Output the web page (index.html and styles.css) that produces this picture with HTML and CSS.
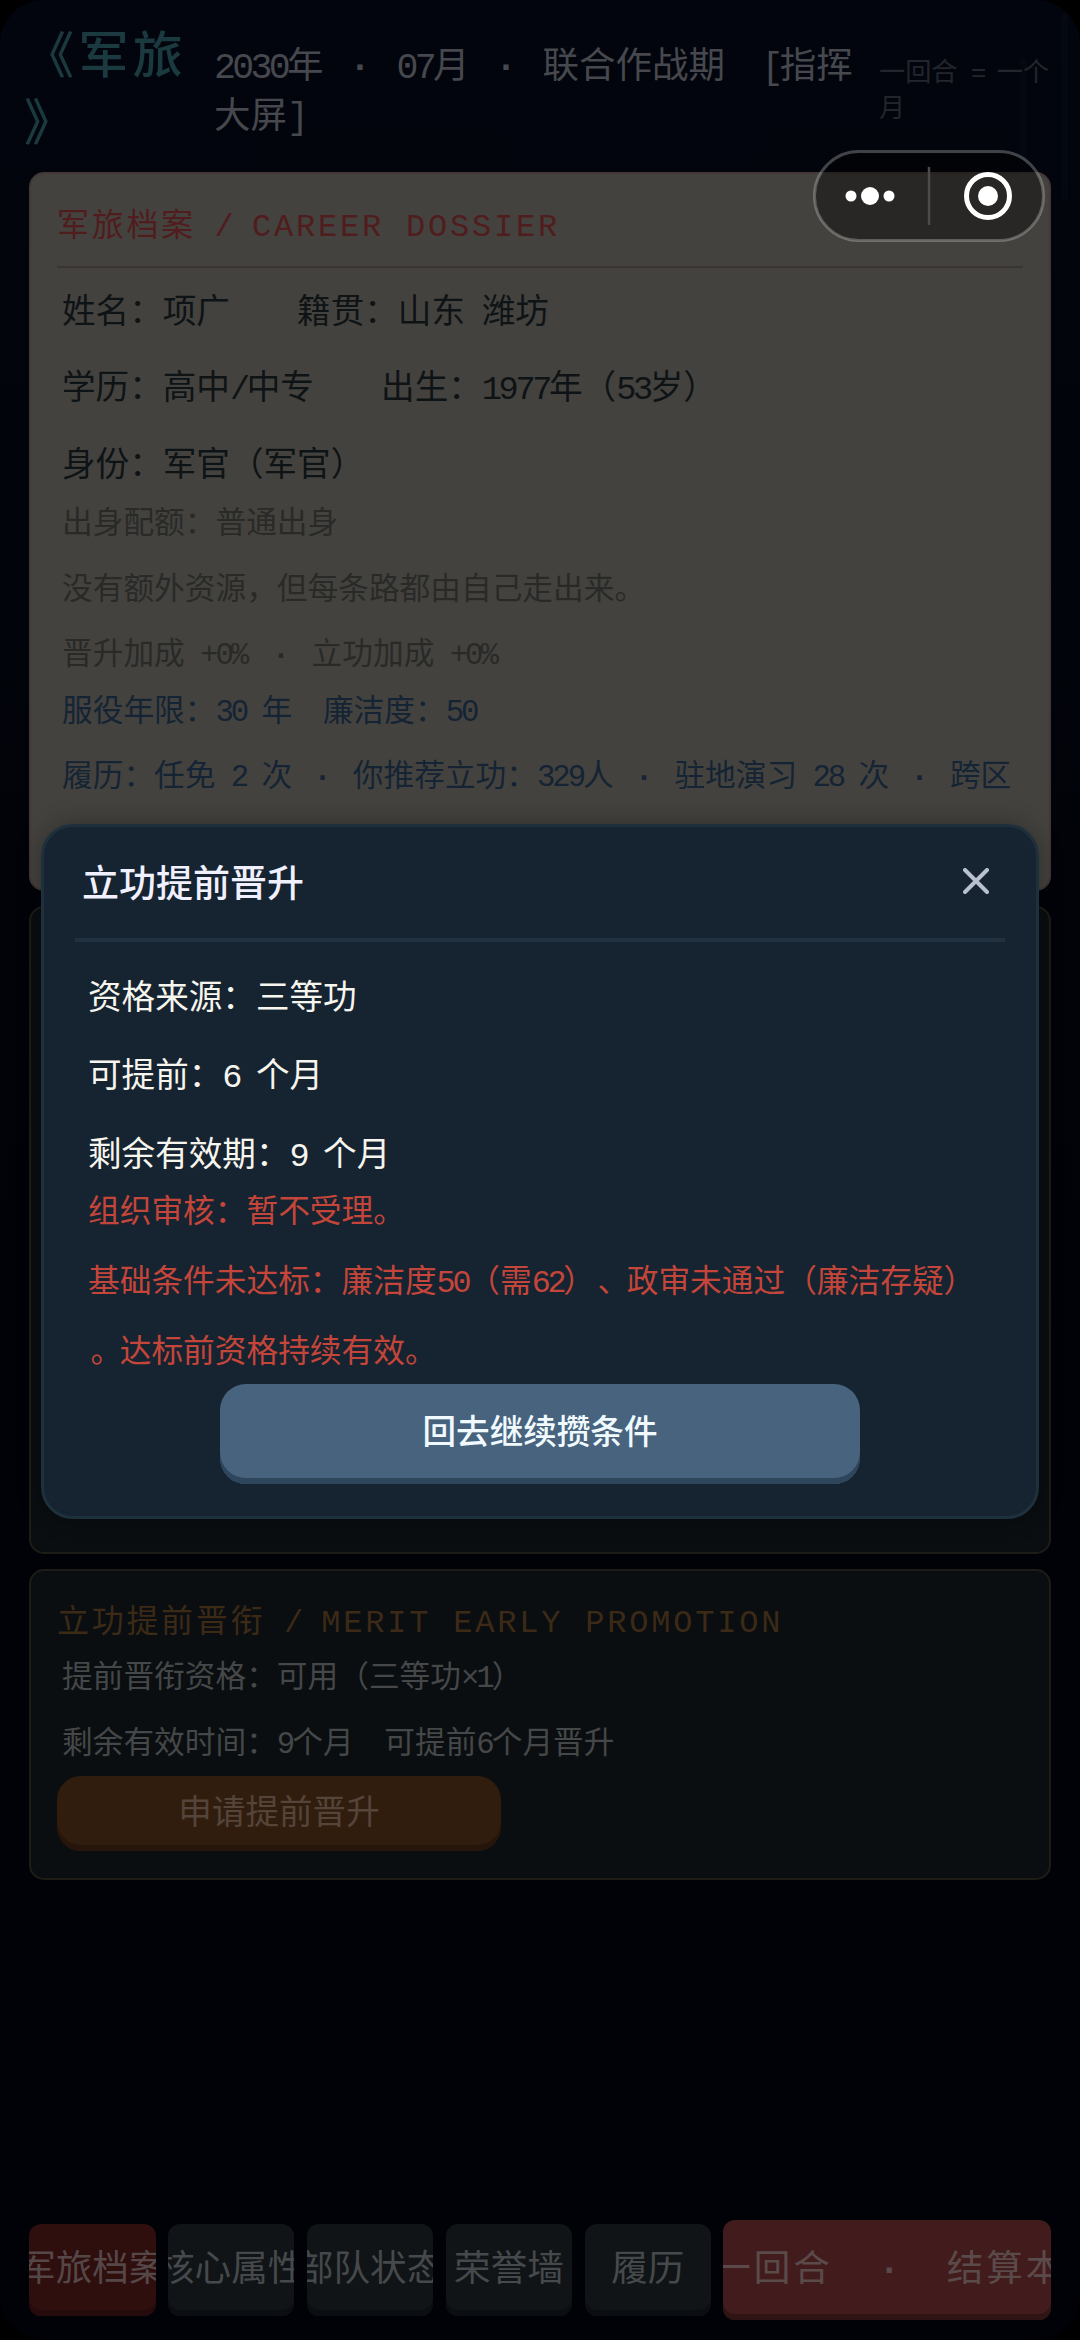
FILE: index.html
```html
<!DOCTYPE html>
<html lang="zh-CN">
<head>
<meta charset="utf-8">
<title>军旅</title>
<link rel="stylesheet" href="styles.css">
</head>
<body>
<div class="screen">
  <header class="top">
    <div class="brand">《军旅<br>》</div>
    <div class="date"><i>2030</i>年<i> </i><b>·</b><i> 07</i>月<i> </i><b>·</b><i> </i>联合作战期<i>  [</i>指挥<br>大屏<i>]</i></div>
    <div class="hint">一回合<i> = </i>一个<br>月</div>
  </header>

  <section class="card dossier">
    <h2 class="title red">军旅档案<i> / </i><em>CAREER DOSSIER</em></h2>
    <div class="main">
      <p>姓名：项广<i>    </i>籍贯：山东<i> </i>潍坊</p>
      <p>学历：高中<i>/</i>中专<i>    </i>出生：<i>1977</i>年（<i>53</i>岁）</p>
      <p>身份：军官（军官）</p>
    </div>
    <div class="small muted">
      <p>出身配额：普通出身</p>
      <p>没有额外资源，但每条路都由自己走出来。</p>
      <p>晋升加成<i> +0</i><u>%</u><i> </i><b>·</b><i> </i>立功加成<i> +0</i><u>%</u></p>
    </div>
    <div class="small blue">
      <p>服役年限：<i>30 </i>年<i>  </i>廉洁度：<i>50</i></p>
      <p>履历：任免<i> 2 </i>次<i> </i><b>·</b><i> </i>你推荐立功：<i>329</i>人<i> </i><b>·</b><i> </i>驻地演习<i> 28 </i>次<i> </i><b>·</b><i> </i>跨区</p>
    </div>
  </section>

  <section class="card status"></section>

  <section class="card merit">
    <h2 class="title gold">立功提前晋衔<i> / </i><em>MERIT EARLY PROMOTION</em></h2>
    <div class="small pale">
      <p>提前晋衔资格：可用（三等功<i>×1</i>）</p>
      <p>剩余有效时间：<i>9</i>个月<i>  </i>可提前<i>6</i>个月晋升</p>
    </div>
    <div class="button apply">申请提前晋升</div>
  </section>

  <nav class="tabs">
    <div class="tab on"><span>军旅档案</span></div>
    <div class="tab"><span>核心属性</span></div>
    <div class="tab"><span>部队状态</span></div>
    <div class="tab"><span>荣誉墙</span></div>
    <div class="tab"><span>履历</span></div>
    <div class="tab next"><span>下一回合<b class="dot">·</b>结算本月</span></div>
  </nav>

  <div class="modal">
    <div class="modal-head">
      <span>立功提前晋升</span>
      <svg class="close" viewBox="0 0 26 26"><path d="M2 2L24 24M24 2L2 24"/></svg>
    </div>
    <div class="main">
      <p>资格来源：三等功</p>
      <p>可提前：<i>6 </i>个月</p>
      <p>剩余有效期：<i>9 </i>个月</p>
    </div>
    <div class="warn">
      <p>组织审核：暂不受理。</p>
      <p>基础条件未达标：廉洁度<i>50</i>（需<i>62</i>）<s>、</s>政审未通过（廉洁存疑）</p>
      <p><s>。</s>达标前资格持续有效。</p>
    </div>
    <div class="button back">回去继续攒条件</div>
  </div>

  <svg class="capsule" viewBox="0 0 232 92">
    <rect class="shell" x="1.5" y="1.5" width="229" height="89" rx="44.5"/>
    <circle cx="38" cy="46" r="5.5"/><circle cx="57" cy="46" r="9"/><circle cx="76" cy="46" r="5.5"/>
    <path class="split" d="M116 17V75"/>
    <circle class="ring" cx="175" cy="46" r="21.5"/><circle cx="175" cy="46" r="10"/>
  </svg>
</div>
</body>
</html>
```
FILE: styles.css
```css
* { box-sizing: border-box; }
body { margin: 0; background: #000; }
.screen {
  position: relative;
  width: 1080px;
  height: 2340px;
  display: flex;
  flex-direction: column;
  overflow: hidden;
  border-radius: 44px;
  background: linear-gradient(#02050d, #010207 60%);
  font-family: "Noto Sans CJK SC", "Noto Sans CJK JP", sans-serif;
  text-spacing-trim: space-all;
  white-space: nowrap;
}
.screen::before, .screen::after { content: ""; position: absolute; width: 7px; background: rgba(30,70,90,.06); }
.screen::before { left: 1020px; top: 58px; height: 114px; }
.screen::after { left: 1061px; top: 14px; height: 186px; }
p, h2 { margin: 0; font-weight: 400; }
i, u { font-family: "Liberation Mono", monospace; font-style: normal; letter-spacing: -.1em; text-decoration: none; white-space: pre; }
i, u, b, em { line-height: 0; }
u { letter-spacing: .03em; }
b { display: inline-block; width: 1em; text-align: center; font-family: "Liberation Mono", monospace; }
s { display: inline-block; padding-left: .08em; width: 1em; text-decoration: none; }

.top { display: flex; height: 172px; padding: 18px 0 0 27px; }
.brand { width: 187px; margin-left: -3px; margin-right: 3px; font-size: 50px; letter-spacing: 4.4px; line-height: 67px; color: #1b3a40; font-weight: 500; }
.date { width: 665px; padding-top: 20px; font-size: 36.5px; line-height: 49.7px; color: #46484d; }
.hint { padding-top: 34px; font-size: 26.2px; line-height: 36px; color: #22252b; }

.card { flex: none; margin: 0 29px; border: 2px solid #1e1c17; border-radius: 15px; background: #0a0e10; }
.dossier { height: 719px; background: #44423e; border-color: #423836; padding: 28px 26px 0; }
.title { font-size: 32px; letter-spacing: 2.7px; line-height: 40px; }
.title i { letter-spacing: -.5px; }
.title em { font-family: "Liberation Mono", monospace; font-style: normal; letter-spacing: 2.8px; }
.red { color: #501c1d; height: 66px; border-bottom: 2px solid #3a3532; }
.gold { color: #3c2a17; }
.main { font-size: 33.6px; color: #0e1316; }
.dossier .main { padding: 3px 0 0 5px; }
.dossier .main p { line-height: 76.4px; height: 76.4px; }
.small { font-size: 30.7px; padding-left: 5px; }
.small p { height: 65.5px; line-height: 65.5px; }
.muted { color: #292a28; margin-top: -13px; }
.blue { color: #142434; margin-top: -9px; }
.blue b { width: .975em; }
.pale { color: #454748; }

.status { height: 648px; margin-top: 15px; }
.merit { height: 311px; margin-top: 15px; padding: 27px 26px 0; }
.merit .title { height: 43px; }
.button { display: flex; align-items: center; justify-content: center; font-size: 33.6px; }
.apply { width: 444px; height: 75px; margin-top: 4px; border-radius: 24px; background: #311d0e; box-shadow: inset 0 -6px #26150a; color: #544439; padding-bottom: 9px; }

.tabs { display: flex; align-items: center; gap: 12.3px; margin: 338px 29px 0; height: 103px; }
.tab { flex: 0 0 126.6px; height: 92px; display: flex; justify-content: center; align-items: center; overflow: hidden; border-radius: 12px; background: #101416; box-shadow: inset 0 -6px #0b0e11; color: #46494b; font-size: 36.6px; padding-bottom: 9px; }
.on { background: #2f0e0e; box-shadow: inset 0 -6px #260b0c; color: #554748; }
.next { flex: 1; height: 100px; background: #421c1c; box-shadow: inset 0 -6px #2e1414; color: #5b4a4a; letter-spacing: 2.9px; }
.next span { margin-left: 5px; }
.dot { width: 114px; padding-left: 2px; }

.modal { position: absolute; left: 41px; top: 824px; width: 998px; height: 695px; padding: 0 31px; border: 3px solid #1f303d; border-radius: 32px; background: #162330; box-shadow: 0 0 24px rgba(0,0,0,.3); }
.modal-head { display: flex; align-items: center; justify-content: space-between; height: 115px; padding: 0 16px 3px 7px; border-bottom: 4px solid #223140; font-size: 37px; color: #f0f0ff; font-weight: 500; }
.close { width: 26px; height: 26px; stroke: #b9c0d0; stroke-width: 4; stroke-linecap: round; }
.modal .main { padding: 14px 0 0 13px; color: #f6f5ee; }
.modal .main p { height: 78.4px; line-height: 78.4px; }
.warn { margin-top: -18px; padding-left: 13px; font-size: 31.7px; color: #c4463a; }
.warn p { height: 70px; line-height: 70px; }
.back { width: 640px; height: 100px; margin: 1px auto 0; border-radius: 26px; background: #47637d; box-shadow: inset 0 -6px #2e465c; color: #f0fafe; padding-bottom: 9px; font-weight: 500; }

.capsule { position: absolute; left: 813px; top: 150px; width: 232px; height: 92px; fill: #fff; }
.shell { fill: rgba(0,0,0,.4); stroke: rgba(255,255,255,.25); stroke-width: 3; }
.split { stroke: #4c4b48; stroke-width: 2.5; }
.ring { fill: none; stroke: #fff; stroke-width: 5; }
```
